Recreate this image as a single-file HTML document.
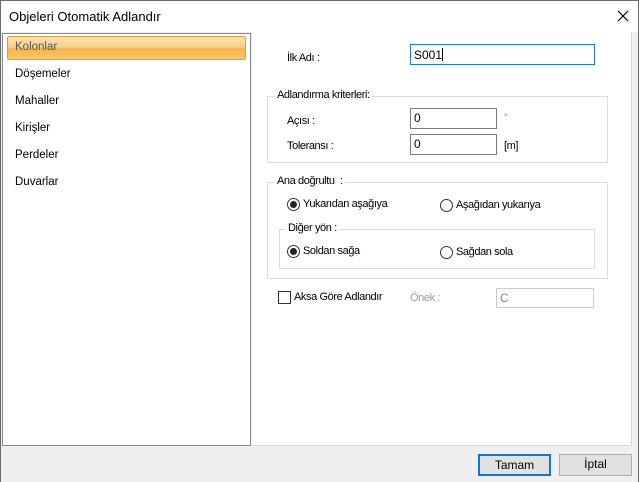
<!DOCTYPE html>
<html><head><style>
*{margin:0;padding:0;box-sizing:border-box}
body{width:639px;height:482px;position:relative;background:#efefef;font-family:"Liberation Sans",sans-serif;font-size:12px;color:#000;overflow:hidden}
.win{position:absolute;left:0;top:0;width:639px;height:482px;border:1px solid #6a6a6a;border-bottom:none}
.title{position:absolute;left:1px;top:1px;width:637px;height:31px;background:#fff}
.a{position:absolute;white-space:nowrap}
.list{position:absolute;left:2px;top:33px;width:249px;height:413px;background:#fff;border:1px solid #888;font-size:11.5px}
.sel{position:absolute;left:4px;top:2px;width:239px;height:24px;border:1px solid #d9a048;border-radius:2px;background:linear-gradient(#fde1ae 0%,#fbd08a 45%,#f7b54a 55%,#f9c56a 100%)}
.right{position:absolute;left:252px;top:32px;width:380px;height:414px;background:#fff;border-right:1px solid #d8d8d8;border-bottom:1px solid #d8d8d8;font-size:11px;letter-spacing:-0.4px}
.inp{position:absolute;height:21px;border:1px solid #7a7a7a;background:#fff;padding:2px 3px;font-size:12px;letter-spacing:0}
.grp{position:absolute;border:1px solid #dcdcdc}
.gl{position:absolute;background:#fff;padding:0 2px;top:-8px}
.rad{position:absolute;width:13px;height:13px;border:1px solid #333;border-radius:50%;background:#fff}
.rad.on::after{content:"";position:absolute;left:2px;top:2px;width:7px;height:7px;border-radius:50%;background:#222}
.btn{position:absolute;height:22px;background:#e1e1e1;border:1px solid #adadad;text-align:center;line-height:19px;font-size:12px}
</style></head><body>
<div class="win"></div>
<div class="title"></div>
<div class="a" style="left:9px;top:9px;font-size:13px">Objeleri Otomatik Adlandır</div>
<svg class="a" style="left:617px;top:10px" width="12" height="12"><path d="M1 1L11 11M11 1L1 11" stroke="#000" stroke-width="1.2"/></svg>
<div class="list">
<div class="sel"></div>
<div class="a" style="left:12px;top:7px;color:#555">Kolonlar</div>
<div class="a" style="left:12px;top:34px">Döşemeler</div>
<div class="a" style="left:12px;top:61px">Mahaller</div>
<div class="a" style="left:12px;top:88px">Kirişler</div>
<div class="a" style="left:12px;top:115px">Perdeler</div>
<div class="a" style="left:12px;top:142px">Duvarlar</div>
</div>
<div class="right">
<div class="a" style="left:35px;top:20px">İlk Adı :</div>
<div class="inp" style="left:158px;top:12px;width:185px;height:21px;border:1px solid #1a7ad8;padding-top:3px">S001<span style="display:inline-block;width:1px;height:13px;background:#000;vertical-align:-2px"></span></div>
<div class="grp" style="left:15px;top:64px;width:341px;height:67px"><div class="gl" style="left:7px">Adlandırma kriterleri:</div></div>
<div class="a" style="left:35px;top:83px">Açısı :</div>
<div class="inp" style="left:158px;top:76px;width:87px">0</div>
<div class="a" style="left:252px;top:80px;font-size:9px;color:#888">°</div>
<div class="a" style="left:35px;top:108px">Toleransı :</div>
<div class="inp" style="left:158px;top:102px;width:87px">0</div>
<div class="a" style="left:252px;top:108px">[m]</div>
<div class="grp" style="left:15px;top:150px;width:341px;height:97px"><div class="gl" style="left:7px">Ana doğrultu&nbsp; :</div></div>
<div class="rad on" style="left:35px;top:166px"></div>
<div class="a" style="left:51px;top:166px">Yukarıdan aşağıya</div>
<div class="rad" style="left:188px;top:167px"></div>
<div class="a" style="left:204px;top:167px">Aşağıdan yukarıya</div>
<div class="grp" style="left:27px;top:197px;width:316px;height:40px"><div class="gl" style="left:6px">Diğer yön :</div></div>
<div class="rad on" style="left:35px;top:213px"></div>
<div class="a" style="left:51px;top:213px">Soldan sağa</div>
<div class="rad" style="left:188px;top:214px"></div>
<div class="a" style="left:204px;top:214px">Sağdan sola</div>
<div class="a" style="left:26px;top:259px;width:13px;height:13px;border:1px solid #333"></div>
<div class="a" style="left:42px;top:259px">Aksa Göre Adlandır</div>
<div class="a" style="left:158px;top:260px;color:#999">Önek :</div>
<div class="inp" style="left:244px;top:256px;width:98px;height:20px;border-color:#ccc;color:#888">C</div>
</div>
<div class="btn" style="left:478px;top:454px;width:73px;border:2px solid #0b78d7">Tamam</div>
<div class="btn" style="left:559px;top:454px;width:73px">İptal</div>
</body></html>
